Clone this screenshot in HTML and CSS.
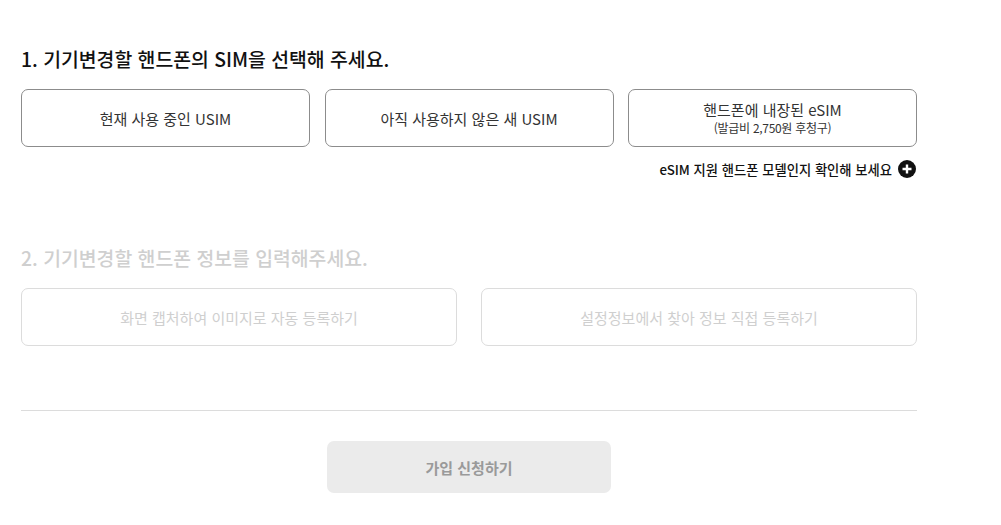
FILE: index.html
```html
<!DOCTYPE html>
<html lang="ko">
<head>
<meta charset="utf-8">
<link rel="stylesheet" href="styles.css">
</head>
<body>
<main class="wrap">
  <section class="step">
    <h2 class="step-title">1. 기기변경할 핸드폰의 SIM을 선택해 주세요.</h2>
    <div class="options three">
      <button class="opt">현재 사용 중인 USIM</button>
      <button class="opt">아직 사용하지 않은 새 USIM</button>
      <button class="opt"><span class="opt-main">핸드폰에 내장된 eSIM</span><span class="opt-sub">(발급비 2,750원 후청구)</span></button>
    </div>
    <div class="esim-link">
      <span>eSIM 지원 핸드폰 모델인지 확인해 보세요</span>
      <svg class="plus" width="18" height="18" viewBox="0 0 18 18"><circle cx="9" cy="9" r="9" fill="#111"/><path d="M9 4.5v9M4.5 9h9" stroke="#fff" stroke-width="2.4"/></svg>
    </div>
  </section>
  <section class="step disabled">
    <h2 class="step-title">2. 기기변경할 핸드폰 정보를 입력해주세요.</h2>
    <div class="options two">
      <button class="opt">화면 캡처하여 이미지로 자동 등록하기</button>
      <button class="opt">설정정보에서 찾아 정보 직접 등록하기</button>
    </div>
  </section>
  <hr class="divider">
  <div class="actions">
    <button class="submit">가입 신청하기</button>
  </div>
</main>
</body>
</html>
```
FILE: styles.css
```css
* { box-sizing: border-box; }
html, body { margin: 0; background: #fff; }
body {
  font-family: "Noto Sans CJK KR", "Noto Sans", sans-serif;
  color: #111;
}
.wrap {
  width: 917px;
  padding: 45px 0 0 21px;
}
.step-title {
  margin: 0 0 16px;
  font-size: 19.35px;
  line-height: 28px;
  font-weight: 500;
  color: #111;
}
.options { display: grid; }
.options.three { grid-template-columns: repeat(3, 1fr); gap: 14.5px; }
.options.two { grid-template-columns: repeat(2, 1fr); gap: 24px; }
.opt {
  height: 58px;
  border: 1px solid #8c8c8c;
  border-radius: 7px;
  background: #fff;
  font-family: inherit;
  font-size: 15px;
  color: #333;
  display: flex;
  flex-direction: column;
  align-items: center;
  justify-content: center;
  padding: 0;
}
.opt-main { line-height: 20px; }
.opt-sub { font-size: 12px; line-height: 16px; color: #333; letter-spacing: -0.3px; }
.esim-link {
  margin-top: 12px;
  height: 20px;
  display: flex;
  justify-content: flex-end;
  align-items: center;
  gap: 6px;
  font-size: 13.3px;
  font-weight: 500;
  color: #111;
  padding-right: 1px;
}
.plus { display: block; }
.step.disabled { margin-top: 65px; }
.step.disabled .step-title { color: #cfcfcf; }
.step.disabled .opt { border-color: #dcdcdc; color: #cfcfcf; }
.divider {
  margin: 64px 0 0;
  border: 0;
  border-top: 1px solid #dcdcdc;
}
.actions {
  display: flex;
  justify-content: center;
  padding-top: 30px;
}
.submit {
  width: 284px;
  height: 52px;
  border: 0;
  border-radius: 7px;
  background: #ebebeb;
  color: #9a9a9a;
  font-family: inherit;
  font-size: 15px;
  font-weight: 700;
}
```
